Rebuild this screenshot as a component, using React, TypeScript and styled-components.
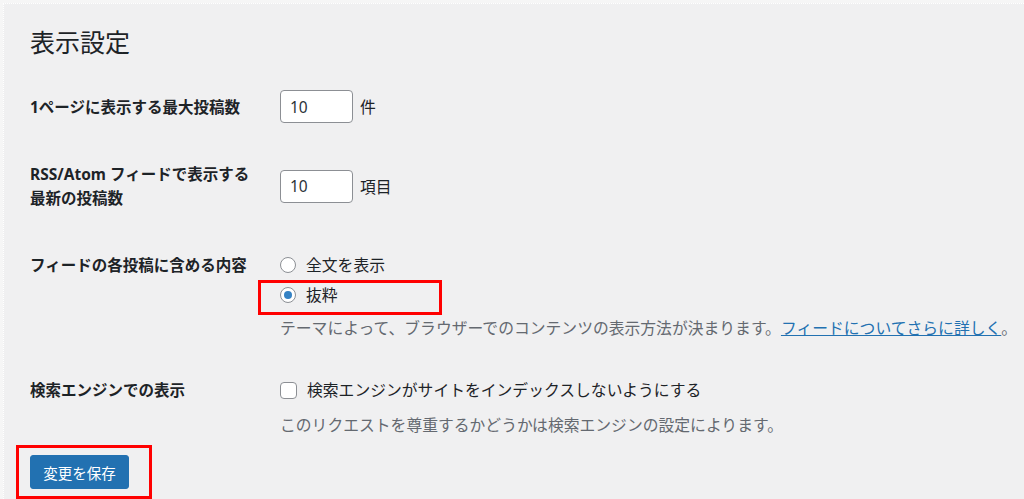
import React from "react";
import styled, { createGlobalStyle } from "styled-components";

const Global = createGlobalStyle`
  html, body { margin: 0; padding: 0; overflow: hidden; }
  body {
    background: #f6f6f6;
    font-family: "Noto Sans", "Noto Sans CJK JP", sans-serif;
    color: #1d2327;
  }
`;

const Page = styled.div`
  margin: 3px 0 0 3px;
  width: 1021px;
  height: 496px;
  box-sizing: border-box;
  border-top: 1px dotted #ffffff;
  border-left: 1px dotted #ffffff;
  background: #f0f0f1;
  padding: 22px 0 0 26px;
  display: flex;
  flex-direction: column;
`;

const Title = styled.h1`
  margin: 0;
  font-size: 25px;
  font-weight: 400;
  line-height: 32px;
  color: #1d2327;
`;

const Row = styled.div<{ $align: "center" | "start"; $mt: number }>`
  display: grid;
  grid-template-columns: 250px 1fr;
  align-items: ${(p) => p.$align};
  margin-top: ${(p) => p.$mt}px;
`;

const Label = styled.div`
  font-size: 15.5px;
  font-weight: 700;
  line-height: 24px;
  width: 225px;
`;

const Field = styled.div`
  display: flex;
  flex-direction: column;
  font-size: 15.8px;
  line-height: 24px;
`;

const InputLine = styled.div`
  display: flex;
  align-items: center;
  gap: 7px;
  font-size: 15.8px;
`;

const NumberBox = styled.div`
  width: 73px;
  height: 33px;
  box-sizing: border-box;
  border: 1px solid #8c8f94;
  border-radius: 4px;
  background: #fff;
  padding: 0 9px;
  display: flex;
  align-items: center;
  font-size: 15.5px;
  color: #2c3338;
`;

const Unit = styled.span`
  color: #1d2327;
`;

const ChoiceLine = styled.label<{ $mt?: number }>`
  position: relative;
  display: flex;
  align-items: center;
  gap: 10px;
  margin-top: ${(p) => p.$mt ?? 0}px;
  color: #1d2327;
`;

const Radio = styled.span<{ $checked?: boolean }>`
  width: 16px;
  height: 16px;
  box-sizing: border-box;
  border-radius: 50%;
  border: 1px solid #8c8f94;
  background: #fff;
  display: flex;
  align-items: center;
  justify-content: center;
  &::after {
    content: "";
    display: ${(p) => (p.$checked ? "block" : "none")};
    width: 8px;
    height: 8px;
    border-radius: 50%;
    background: #3582c4;
  }
`;

const Checkbox = styled.span`
  width: 17px;
  height: 17px;
  box-sizing: border-box;
  border: 1px solid #8c8f94;
  border-radius: 4px;
  background: #fff;
`;

const Description = styled.p<{ $mt: number }>`
  margin: ${(p) => p.$mt}px 0 0;
  color: #646970;
  font-size: 15.8px;
  line-height: 24px;
  white-space: nowrap;
`;

const Link = styled.a`
  color: #2271b1;
  text-decoration: underline;
`;

const Highlight = styled.span<{ $l: number; $t: number; $w: number; $h: number }>`
  position: absolute;
  left: ${(p) => p.$l}px;
  top: ${(p) => p.$t}px;
  width: ${(p) => p.$w}px;
  height: ${(p) => p.$h}px;
  box-sizing: border-box;
  border: 3px solid #f00;
  pointer-events: none;
`;

const SubmitWrap = styled.div`
  position: relative;
  margin-top: 18px;
  align-self: flex-start;
`;

const Button = styled.button`
  width: 99px;
  height: 34px;
  border: 1px solid #2271b1;
  border-radius: 3px;
  background: #2271b1;
  color: #fff;
  font-family: "Noto Sans", "Noto Sans CJK JP", sans-serif;
  font-size: 14.5px;
  padding: 0;
  cursor: pointer;
`;

export default function App() {
  return (
    <>
      <Global />
      <Page>
        <Title>表示設定</Title>

        <Row $align="center" $mt={32}>
          <Label>1ページに表示する最大投稿数</Label>
          <InputLine>
            <NumberBox>10</NumberBox>
            <Unit>件</Unit>
          </InputLine>
        </Row>

        <Row $align="center" $mt={39}>
          <Label>RSS/Atom フィードで表示する最新の投稿数</Label>
          <InputLine>
            <NumberBox>10</NumberBox>
            <Unit>項目</Unit>
          </InputLine>
        </Row>

        <Row $align="start" $mt={43}>
          <Label>フィードの各投稿に含める内容</Label>
          <Field>
            <ChoiceLine>
              <Radio />
              全文を表示
            </ChoiceLine>
            <ChoiceLine $mt={6}>
              <Radio $checked />
              抜粋
              <Highlight $l={-22} $t={-3} $w={184} $h={35} />
            </ChoiceLine>
            <Description $mt={9}>
              テーマによって、ブラウザーでのコンテンツの表示方法が決まります。
              <Link href="#">フィードについてさらに詳しく</Link>。
            </Description>
          </Field>
        </Row>

        <Row $align="start" $mt={38}>
          <Label>検索エンジンでの表示</Label>
          <Field>
            <ChoiceLine>
              <Checkbox />
              検索エンジンがサイトをインデックスしないようにする
            </ChoiceLine>
            <Description $mt={11}>
              このリクエストを尊重するかどうかは検索エンジンの設定によります。
            </Description>
          </Field>
        </Row>

        <SubmitWrap>
          <Button type="button">変更を保存</Button>
          <Highlight $l={-14} $t={-10} $w={136} $h={54} />
        </SubmitWrap>
      </Page>
    </>
  );
}
